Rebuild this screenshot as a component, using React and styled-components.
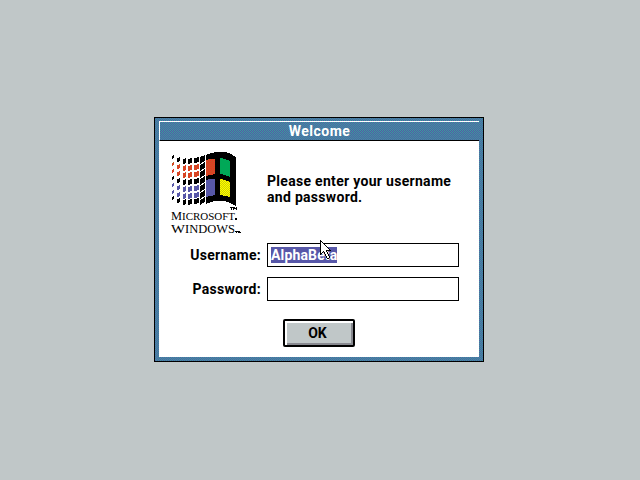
import React from "react";
import styled, { createGlobalStyle } from "styled-components";

const Global = createGlobalStyle`
  * { box-sizing: border-box; }
  body { margin: 0; background: #c0c7c8; font: bold 14px/16px Roboto, "Liberation Sans", sans-serif; color: #000; }
`;
const checkers = size => {
  let d = "";
  for (let y = 0; y < size; y++) for (let x = y % 2; x < size; x += 2) d += `M${x} ${y}h1v1h-1z`;
  return d;
};
const tile = 16;
const dither = `url("data:image/svg+xml,${encodeURIComponent(
  `<svg xmlns="http://www.w3.org/2000/svg" width="${tile}" height="${tile}" shape-rendering="crispEdges"><path fill="#38a09c" d="M0 0h${tile}v${tile}H0z"/><path fill="#5757a8" d="${checkers(tile)}"/></svg>`
)}")`;

const Desktop = styled.main`
  position: relative; width: 640px; height: 480px; padding: 117px 0 0 154px; overflow: hidden;
`;
const Dialog = styled.section`
  width: 330px; height: 245px; border: 1px solid #000; padding: 3px 4px 4px;
  background: ${dither} 0 0 / ${tile}px ${tile}px;
`;
const Title = styled.header`
  height: 20px; border-style: solid; border-width: 1px 0 1px 1px; border-color: #fff #fff #000;
  color: #fff; display: flex; justify-content: center; align-items: center; font-weight: bold;
`;
const Content = styled.div`
  height: 216px; background: #fff; padding: 10px 20px 0 11px; display: flex; flex-direction: column;
`;
const Intro = styled.div`
  display: flex; height: 92px; gap: 23px;
`;
const Logo = styled.svg`
  width: 74px; height: 86px; display: block; overflow: visible;
`;
const Message = styled.p`
  margin: 22px 0 0; white-space: nowrap;
`;
const LogoText = styled.text`
  font: normal ${p => p.$size}px "Liberation Serif", "Times New Roman", serif;
`;
const Line = styled.span`
  display: block; letter-spacing: ${p => p.$track ?? 0.3}px; white-space: nowrap;
`;
const Row = styled.label`
  display: grid; grid-template-columns: 91px 192px; column-gap: 6px; align-items: center;
  height: 24px; margin-bottom: 10px; text-align: right;
`;
const Field = styled.span`
  height: 24px; border: 1px solid #000; padding: 3px; text-align: left; display: block;
`;
const Selected = styled.span`
  display: block; height: 16px; width: 66px; background: #5757a8; color: #fff; white-space: nowrap;
  letter-spacing: 0.15px;
`;
const Button = styled.button`
  width: 72px; height: 28px; margin: 8px 0 0 113px; padding: 0 3px 0 0; border: 2px solid #000; border-radius: 2px;
  background: #c0c7c8; box-shadow: inset 2px 2px #fff, inset -2px -2px #87888f; font: inherit; color: #000;
`;
const Cursor = styled.svg`
  position: absolute; left: 320px; top: 240px; width: 11px; height: 19px;
`;

const arrow = [
  "X", "XX", "X.X", "X..X", "X...X", "X....X", "X.....X", "X......X", "X.......X", "X........X",
  "X.....XXXXX", "X..X..X", "X.X X..X", "XX  X..X", "X    X..X", "     X..X", "      X..X", "      X..X", "       XX",
];
const rowFills = ["#000", "url(#red)", "url(#red)", "#000", "#5757a8", "#5757a8", "#000"];
const columns = [
  { x: 172, y: 155, w: 2, h: 3 },
  { x: 177, y: 157, w: 3, h: 4 },
  { x: 183, y: 158, w: 3, h: 5 },
  { x: 188, y: 158, w: 4, h: 5 },
  { x: 194, y: 157, w: 5, h: 5 },
];

function WindowsLogo() {
  return (
    <Logo viewBox="170 151 74 86" shapeRendering="crispEdges">
      <defs>
        <pattern id="red" width="16" height="16" patternUnits="userSpaceOnUse">
          <path fill="#b06c28" d="M0 0h16v16H0z" /><path fill="#ff2020" d={checkers(16)} />
        </pattern>
        <pattern id="yellow" width="16" height="16" patternUnits="userSpaceOnUse">
          <path fill="#d0d000" d="M0 0h16v16H0z" /><path fill="#ff0" d={checkers(16)} />
        </pattern>
      </defs>
      {columns.map(c => rowFills.map((fill, i) => {
        const y = c.y + Math.round(i * 6.9);
        return <path key={`${c.x}-${i}`} fill={fill} d={`M${c.x} ${y + 1}L${c.x + c.w} ${y}V${y + c.h}L${c.x} ${y + c.h + 1}Z`} />;
      }))}
      <path d="M200 157L205 155V202L200 205Z" />
      {[162, 169, 176, 183, 190, 197].map(y => <path key={y} d={`M200 ${y + 2.5}L205 ${y - .5}`} stroke="#fff" />)}
      <path d="M206 155L211 153L216 152H226L231 154L236 157V206L230 203L225 201H214L206 204Z" />
      <path fill="url(#red)" d="M206 160L210 159H215V174L206 176Z" />
      <path fill="#00a857" d="M220 158L225 159L230 161V177L225 175L220 174Z" />
      <path fill="#5757a8" d="M206 180L210 179H215V195L206 197Z" />
      <path fill="url(#yellow)" d="M220 179L225 180L230 182V197L225 196L220 195Z" />
      <path d="M230 207h3v1h-1v2h-1v-2h-1zM233 207h1l1 1 1-1h1v3h-1v-1h-2v1h-1zM235 218h2v2h-2zM235 231h3v1h-1v1h-1v-1h-1zM238 231h1l1 1 1-1v2h-3z" />
      <LogoText $size={12} x="171" y="219.5" textLength="11" lengthAdjust="spacingAndGlyphs">M</LogoText>
      <LogoText $size={11} x="182" y="219.5" textLength="53" lengthAdjust="spacingAndGlyphs">ICROSOFT</LogoText>
      <LogoText $size={13} x="171" y="233" textLength="14" lengthAdjust="spacingAndGlyphs">W</LogoText>
      <LogoText $size={12} x="185" y="233" textLength="50" lengthAdjust="spacingAndGlyphs">INDOWS</LogoText>
    </Logo>
  );
}

export default function App() {
  return (
    <Desktop>
      <Global />
      <Dialog>
        <Title><Line $track={0.5}>Welcome</Line></Title>
        <Content>
          <Intro>
            <WindowsLogo />
            <Message>
              <Line>Please enter your username</Line>
              <Line>and password.</Line>
            </Message>
          </Intro>
          <Row><Line>Username:</Line><Field><Selected>AlphaBeta</Selected></Field></Row>
          <Row><Line>Password:</Line><Field /></Row>
          <Button>OK</Button>
        </Content>
      </Dialog>
      <Cursor viewBox="0 0 11 19" shapeRendering="crispEdges">
        {arrow.flatMap((line, y) => [...line].map((c, x) => c === " " ? null : (
          <rect key={`${x}-${y}`} x={x} y={y} width="1" height="1" fill={c === "X" ? "#000" : "#fff"} />
        )))}
      </Cursor>
    </Desktop>
  );
}
